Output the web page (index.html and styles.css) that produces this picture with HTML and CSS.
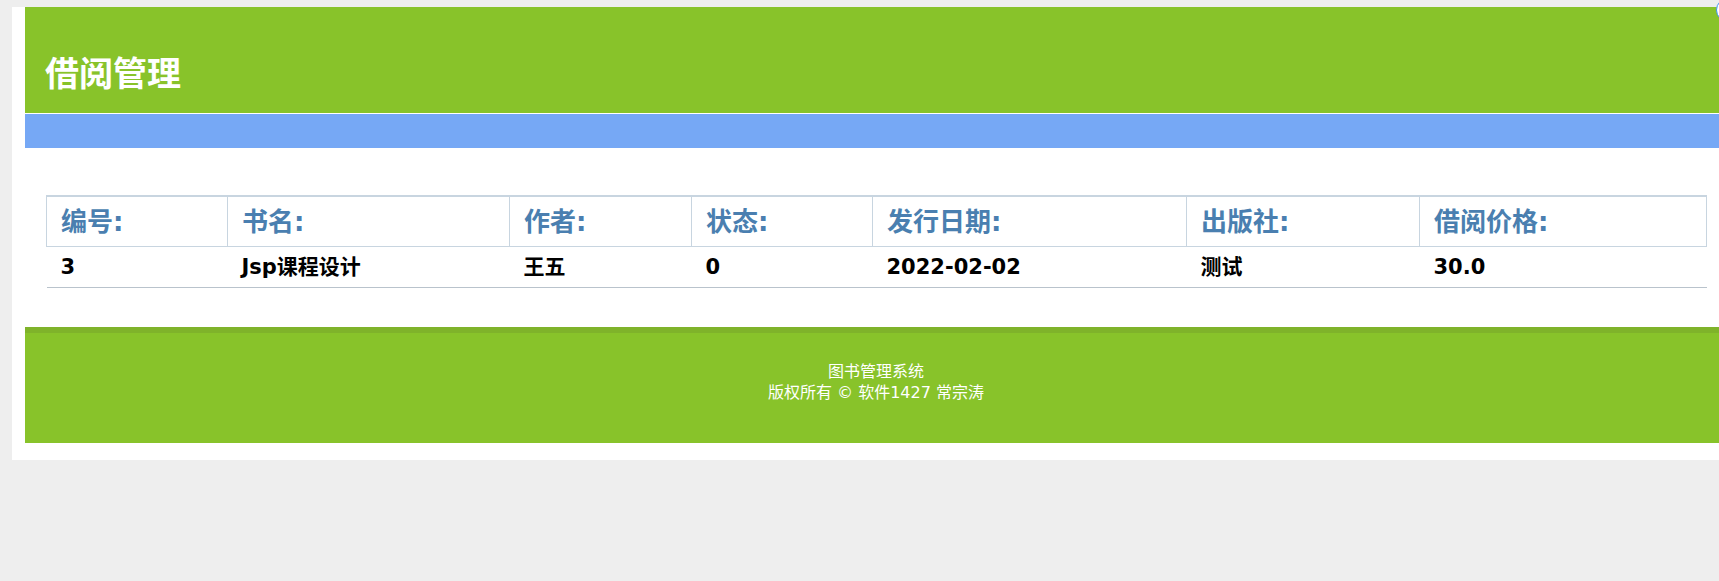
FILE: index.html
```html
<!DOCTYPE html>
<html lang="zh-CN">
<head>
<meta charset="utf-8">
<title>借阅管理</title>
<link rel="stylesheet" href="styles.css">
</head>
<body>
<div class="page">
  <div class="header">
    <h1 class="title">借阅管理</h1>
  </div>
  <div class="nav"></div>
  <div class="content">
    <table class="books">
      <colgroup>
        <col class="c1"><col class="c2"><col class="c3"><col class="c4"><col class="c5"><col class="c6"><col class="c7">
      </colgroup>
      <thead>
        <tr>
          <th>编号:</th>
          <th>书名:</th>
          <th>作者:</th>
          <th>状态:</th>
          <th>发行日期:</th>
          <th>出版社:</th>
          <th>借阅价格:</th>
        </tr>
      </thead>
      <tbody>
        <tr>
          <td>3</td>
          <td>Jsp课程设计</td>
          <td>王五</td>
          <td>0</td>
          <td>2022-02-02</td>
          <td>测试</td>
          <td>30.0</td>
        </tr>
      </tbody>
    </table>
  </div>
  <div class="footer">
    <div class="footer-line">图书管理系统</div>
    <div class="footer-line">版权所有 © 软件1427 常宗涛</div>
  </div>
</div>
<div class="float-btn"></div>
</body>
</html>
```

FILE: styles.css
```css
html, body {
  overflow: hidden;
}
body {
  margin: 0;
  background: #eeeeee;
  font-family: "DejaVu Sans", "Noto Sans CJK SC", sans-serif;
}
.page {
  margin: 7px 0 0 12px;
  padding: 0 0 17px 13px;
  background: #ffffff;
  width: 1702px;
}
.header {
  background: #88c32a;
  border-bottom: 1px solid #ffffff;
  box-sizing: border-box;
  height: 107px;
  padding: 45px 0 0 20px;
}
.title {
  margin: 0;
  font-size: 34px;
  line-height: 40px;
  font-weight: bold;
  color: #ffffff;
  font-family: "Noto Sans CJK SC", sans-serif;
}
.nav {
  background: #76a8f5;
  height: 34px;
}
.content {
  padding: 47px 21px 39px 21px;
}
.books {
  width: 1660px;
  table-layout: fixed;
  border-collapse: collapse;
}
.c1 { width: 181px; }
.c2 { width: 282px; }
.c3 { width: 182px; }
.c4 { width: 181px; }
.c5 { width: 314px; }
.c6 { width: 233px; }
.c7 { width: 287px; }
.books th {
  text-align: left;
  color: #4a7fb0;
  font-size: 26px;
  font-weight: bold;
  border: 1px solid #c8d5e0;
  border-top-width: 2px;
  padding: 0 14px;
  height: 49px;
  line-height: 30px;
}
.books td {
  text-align: left;
  color: #000000;
  font-size: 21px;
  font-weight: bold;
  padding: 0 14px;
  height: 40px;
  line-height: 26px;
  border-bottom: 1px solid #b9c3cc;
}
.footer {
  background: #88c32a;
  border-top: 6px solid #7fb32a;
  padding: 28px 0 40px 0;
  text-align: center;
  color: #ffffff;
  font-size: 16px;
  line-height: 21px;
}
.float-btn {
  position: fixed;
  top: -2px;
  left: 1716px;
  width: 24px;
  height: 24px;
  box-sizing: border-box;
  border: 1.5px solid #3d8ff0;
  border-radius: 50%;
  background: #ffffff;
}
```
